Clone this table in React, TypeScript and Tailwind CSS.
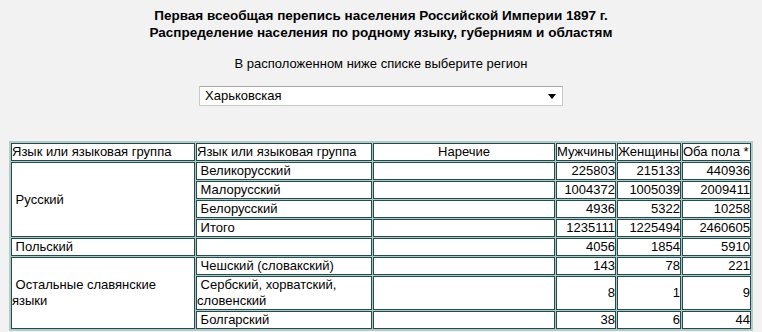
import React from 'react';

type Row = {
  group?: { label: React.ReactNode; span: number };
  lang: string;
  dialect?: string;
  men: string;
  women: string;
  both: string;
};

const NB = '\u00a0';

const rows: Row[] = [
  { group: { label: NB + 'Русский', span: 4 }, lang: NB + 'Великорусский', men: '225803', women: '215133', both: '440936' },
  { lang: NB + 'Малорусский', men: '1004372', women: '1005039', both: '2009411' },
  { lang: NB + 'Белорусский', men: '4936', women: '5322', both: '10258' },
  { lang: NB + 'Итого', men: '1235111', women: '1225494', both: '2460605' },
  { group: { label: NB + 'Польский', span: 1 }, lang: '', men: '4056', women: '1854', both: '5910' },
  {
    group: { label: NB + 'Остальные славянские языки', span: 3 },
    lang: NB + 'Чешский (словакский)',
    men: '143',
    women: '78',
    both: '221',
  },
  { lang: NB + 'Сербский, хорватский, словенский', men: '8', women: '1', both: '9' },
  { lang: NB + 'Болгарский', men: '38', women: '6', both: '44' },
];

const cell = 'border border-[#234d4d] bg-white p-0 leading-[16px] font-normal align-middle';

export default function App() {
  return (
    <div className="min-h-screen bg-[#f2f2f2] text-[13px] text-black font-['Liberation_Sans',Arial,sans-serif]">
      <div className="pt-[7px] text-center text-[13.5px] font-bold leading-[17px]">
        <div>Первая всеобщая перепись населения Российской Империи 1897 г.</div>
        <div>Распределение населения по родному языку, губерниям и областям</div>
      </div>

      <p className="mt-[15px] text-center leading-[16px]">В расположенном ниже списке выберите регион</p>

      <div className="mx-auto mt-[14px] flex h-[20px] w-[364px] items-center justify-between border border-[#c9c9c9] border-t-[#a8a8a8] bg-white pl-[5px] pr-[6px]">
        <span className="leading-[16px]">Харьковская</span>
        <svg width="8" height="5" viewBox="0 0 8 5">
          <path d="M0 0h8L4 5z" fill="#000" />
        </svg>
      </div>

      <table className="mx-auto mt-[35px] table-fixed border-separate border-spacing-[1px] border border-[#b9caca] bg-[#b2c8c8]">
        <thead>
          <tr>
            <th className={`${cell} w-[184px] text-left`}>Язык или языковая группа</th>
            <th className={`${cell} w-[176px] text-left`}>Язык или языковая группа</th>
            <th className={`${cell} w-[182px] text-center`}>Наречие</th>
            <th className={`${cell} w-[60px] text-left`}>Мужчины</th>
            <th className={`${cell} w-[64px] text-left`}>Женщины</th>
            <th className={`${cell} w-[69px] text-left`}>Оба пола *</th>
          </tr>
        </thead>
        <tbody>
          {rows.map((r, i) => (
            <tr key={i}>
              {r.group && (
                <td rowSpan={r.group.span} className={`${cell} text-left`}>
                  {r.group.label}
                </td>
              )}
              <td className={`${cell} text-left`}>{r.lang}</td>
              <td className={cell}>{r.dialect ?? ''}</td>
              <td className={`${cell} text-right`}>{r.men}</td>
              <td className={`${cell} text-right`}>{r.women}</td>
              <td className={`${cell} text-right`}>{r.both}</td>
            </tr>
          ))}
        </tbody>
      </table>
    </div>
  );
}
